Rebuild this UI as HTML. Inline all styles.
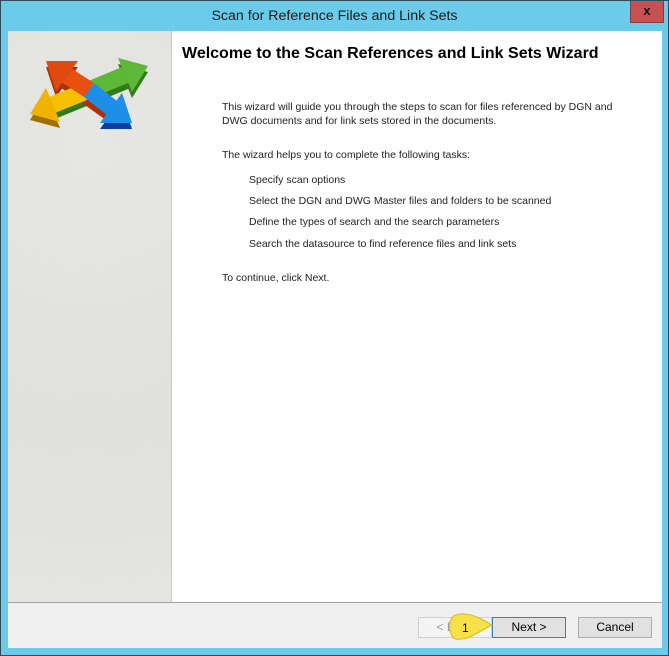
<!DOCTYPE html>
<html><head><style>
body{margin:0;width:669px;height:656px;overflow:hidden;font-family:"Liberation Sans",sans-serif;}
.win{position:absolute;left:0;top:0;width:667px;height:654px;border:1px solid #2b4c5a;background:#6ccbe9;}
.title{position:absolute;left:0;top:7px;width:667px;text-align:center;font-size:14.2px;color:#1a1a1a;}
.close{position:absolute;left:629px;top:0;width:32px;height:21px;background:#c75050;border:1px solid #8a3a3a;border-top:none;color:#111;font-weight:bold;font-size:13px;text-align:center;line-height:20px;}
.client{position:absolute;left:7px;top:30px;width:654px;height:617px;background:#f0f0f0;}
.left{position:absolute;left:0;top:0;width:163px;height:571px;background:radial-gradient(circle at 50% 20%,#e6e6e2 0,#e0e0dc 60%,#e4e4e0 100%);border-right:1px solid #c8c8c8;}
.main{position:absolute;left:164px;top:0;width:490px;height:571px;background:#fff;}
.sep{position:absolute;left:0;top:571px;width:654px;height:1px;background:#a0a0a0;}
h1{position:absolute;left:10px;top:14px;margin:0;font-size:16px;font-weight:bold;color:#000;}
.t{position:absolute;font-size:10.5px;color:#222;line-height:14px;white-space:nowrap;}
.btn{position:absolute;top:586px;height:19px;border:1px solid #adadad;background:#e1e1e1;font-size:12px;text-align:center;line-height:19px;box-sizing:content-box;}
</style></head><body>
<div class="win">
<div class="title">Scan for Reference Files and Link Sets</div>
<div class="close">x</div>
<div class="client">
<div class="left">
<svg width="163" height="120" viewBox="0 0 163 120">
<g transform="translate(0,6)">
<line x1="44" y1="74" x2="117" y2="44" stroke="#2f7a1a" stroke-width="17"/>
<polygon points="140,35 124,61 110,27" fill="#2f7a1a"/>
<polygon points="22,83 52,91 38,57" fill="#a07000"/>
<line x1="58" y1="44" x2="104" y2="77" stroke="#b03008" stroke-width="17"/>
<polygon points="38,30 48,60 70,30" fill="#b03008"/>
<polygon points="124,92 92,92 114,62" fill="#0d3f9a"/>
</g>
<line x1="44" y1="74" x2="81" y2="59" stroke="#f5c000" stroke-width="17"/>
<line x1="81" y1="59" x2="117" y2="44" stroke="#5cb836" stroke-width="17"/>
<polygon points="140,35 124,61 110,27" fill="#5cb836"/>
<polygon points="22,83 52,91 38,57" fill="#f0b400"/>
<line x1="58" y1="44" x2="81" y2="59" stroke="#e8500f" stroke-width="17"/>
<line x1="81" y1="59" x2="104" y2="77" stroke="#1e8ee8" stroke-width="17"/>
<polygon points="38,30 48,60 70,30" fill="#e04a10"/>
<polygon points="124,92 92,92 114,62" fill="#1e8ee8"/>
</svg>
</div>
<div class="main">
<h1>Welcome to the Scan References and Link Sets Wizard</h1>
<div class="t" style="left:50px;top:69px">This wizard will guide you through the steps to scan for files referenced by DGN and<br>DWG documents and for link sets stored in the documents.</div>
<div class="t" style="left:50px;top:117px">The wizard helps you to complete the following tasks:</div>
<div class="t" style="left:77px;top:142px">Specify scan options</div>
<div class="t" style="left:77px;top:163px">Select the DGN and DWG Master files and folders to be scanned</div>
<div class="t" style="left:77px;top:184px">Define the types of search and the search parameters</div>
<div class="t" style="left:77px;top:206px">Search the datasource to find reference files and link sets</div>
<div class="t" style="left:50px;top:240px">To continue, click Next.</div>
</div>
<div class="sep"></div>
<div class="btn" style="left:410px;width:72px;background:#f4f4f4;border-color:#d0d0d0;color:#999">&lt; Back</div>
<div class="btn" style="left:484px;width:72px;border-color:#3c7fb1;">Next &gt;</div>
<div class="btn" style="left:570px;width:72px;">Cancel</div>
<svg style="position:absolute;left:440px;top:582px" width="50" height="30"><path d="M8,2 C20,-2 34,6 44,12 C34,16 22,28 8,26 C0,24 -1,4 8,2Z" fill="#f7e04a" stroke="#d8b820"/><text x="14" y="19" font-family="Liberation Sans" font-size="12" fill="#000">1</text></svg>
</div>
</div>
</body></html>
